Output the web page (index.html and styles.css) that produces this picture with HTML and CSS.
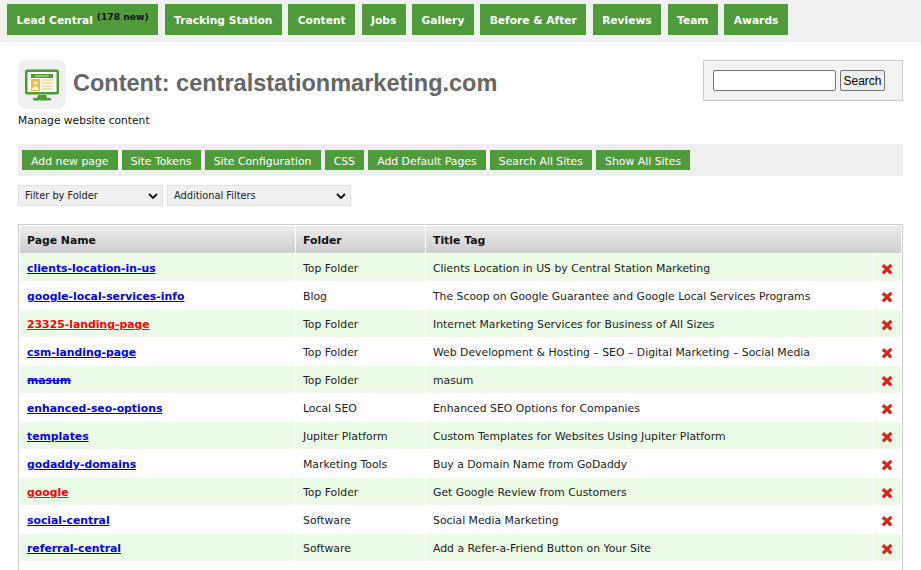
FILE: index.html
```html
<!DOCTYPE html>
<html lang="en">
<head>
<meta charset="utf-8">
<title>Content: centralstationmarketing.com</title>
<link rel="stylesheet" href="styles.css">
</head>
<body>
<svg class="sprite" aria-hidden="true"><symbol id="x" viewBox="0 0 12 12"><path d="M0.500 3.500L3 1l3 2.800L9.500 0.800 11.500 3 8.300 6l3 3.200L9 11.500 6 8.400 2.800 11.500 0.800 9.300 3.800 6z"/></symbol></svg>
<nav class="topnav">
  <a class="navbtn" href="#">Lead Central <sup class="newcount">(178 new)</sup></a>
  <a class="navbtn" href="#">Tracking Station</a>
  <a class="navbtn" href="#">Content</a>
  <a class="navbtn" href="#">Jobs</a>
  <a class="navbtn" href="#">Gallery</a>
  <a class="navbtn" href="#">Before &amp; After</a>
  <a class="navbtn" href="#">Reviews</a>
  <a class="navbtn" href="#">Team</a>
  <a class="navbtn" href="#">Awards</a>
</nav>
<main class="page">
  <header class="pagehead">
    <div class="titleblock">
      <div class="titlerow">
        <div class="appicon">
          <svg viewBox="0 0 36 32" width="36" height="32" aria-hidden="true">
            <rect x="1" y="0.500" width="34" height="25" rx="2" fill="#4a9e2f"/>
            <rect x="3.500" y="3" width="29" height="20" fill="#fff"/>
            <rect x="7" y="5" width="22" height="4" fill="#4a9e2f"/>
            <rect x="11" y="6.500" width="14" height="1" fill="#cfe8c4"/>
            <rect x="7" y="10" width="9" height="12" fill="#f5b93a"/>
            <circle cx="11.500" cy="14" r="2" fill="#fff1c4"/>
            <path d="M8 21c0-3 2-4 3.500-4s3.500 1 3.500 4z" fill="#fff1c4"/>
            <path d="M18 11h11M18 14h11M18 17h11M18 20h11" stroke="#f5c452" stroke-width="1.200"/>
            <path d="M14 26h8l1 3h-10z" fill="#4a9e2f"/>
            <rect x="9" y="29" width="18" height="2.500" rx="1" fill="#4a9e2f"/>
          </svg>
        </div>
        <h1 class="pagetitle">Content: centralstationmarketing.com</h1>
      </div>
      <p class="subtitle">Manage website content</p>
    </div>
    <form class="searchbox">
      <input class="searchinput" type="text">
      <button class="searchbtn" type="button">Search</button>
    </form>
  </header>

  <div class="toolbar">
    <a class="toolbtn" href="#">Add new page</a>
    <a class="toolbtn" href="#">Site Tokens</a>
    <a class="toolbtn" href="#">Site Configuration</a>
    <a class="toolbtn" href="#">CSS</a>
    <a class="toolbtn" href="#">Add Default Pages</a>
    <a class="toolbtn" href="#">Search All Sites</a>
    <a class="toolbtn" href="#">Show All Sites</a>
  </div>

  <div class="filters">
    <div class="filter filter-folder">Filter by Folder<svg class="chev" viewBox="0 0 10 6" width="10" height="6"><path d="M1 1l4 4 4-4" fill="none" stroke="#111" stroke-width="1.800"/></svg></div>
    <div class="filter filter-extra">Additional Filters<svg class="chev" viewBox="0 0 10 6" width="10" height="6"><path d="M1 1l4 4 4-4" fill="none" stroke="#111" stroke-width="1.800"/></svg></div>
  </div>

  <table class="pages">
    <colgroup><col class="col-name"><col class="col-folder"><col><col class="col-del"></colgroup>
    <thead>
      <tr><th>Page Name</th><th>Folder</th><th colspan="2">Title Tag</th></tr>
    </thead>
    <tbody>
      <tr><td><a href="#">clients-location-in-us</a></td><td>Top Folder</td><td>Clients Location in US by Central Station Marketing</td><td class="del"><svg class="x"><use href="#x"/></svg></td></tr>
      <tr><td><a href="#">google-local-services-info</a></td><td>Blog</td><td>The Scoop on Google Guarantee and Google Local Services Programs</td><td class="del"><svg class="x"><use href="#x"/></svg></td></tr>
      <tr><td><a class="warn" href="#">23325-landing-page</a></td><td>Top Folder</td><td>Internet Marketing Services for Business of All Sizes</td><td class="del"><svg class="x"><use href="#x"/></svg></td></tr>
      <tr><td><a href="#">csm-landing-page</a></td><td>Top Folder</td><td>Web Development &amp; Hosting – SEO – Digital Marketing – Social Media</td><td class="del"><svg class="x"><use href="#x"/></svg></td></tr>
      <tr><td><a class="struck" href="#">masum</a></td><td>Top Folder</td><td>masum</td><td class="del"><svg class="x"><use href="#x"/></svg></td></tr>
      <tr><td><a href="#">enhanced-seo-options</a></td><td>Local SEO</td><td>Enhanced SEO Options for Companies</td><td class="del"><svg class="x"><use href="#x"/></svg></td></tr>
      <tr><td><a href="#">templates</a></td><td>Jupiter Platform</td><td>Custom Templates for Websites Using Jupiter Platform</td><td class="del"><svg class="x"><use href="#x"/></svg></td></tr>
      <tr><td><a href="#">godaddy-domains</a></td><td>Marketing Tools</td><td>Buy a Domain Name from GoDaddy</td><td class="del"><svg class="x"><use href="#x"/></svg></td></tr>
      <tr><td><a class="warn" href="#">google</a></td><td>Top Folder</td><td>Get Google Review from Customers</td><td class="del"><svg class="x"><use href="#x"/></svg></td></tr>
      <tr><td><a href="#">social-central</a></td><td>Software</td><td>Social Media Marketing</td><td class="del"><svg class="x"><use href="#x"/></svg></td></tr>
      <tr><td><a href="#">referral-central</a></td><td>Software</td><td>Add a Refer-a-Friend Button on Your Site</td><td class="del"><svg class="x"><use href="#x"/></svg></td></tr>
      <tr><td></td><td></td><td></td><td class="del"></td></tr>
    </tbody>
  </table>
</main>
</body>
</html>
```
FILE: styles.css
```css
* { box-sizing: border-box; }
html, body { margin: 0; padding: 0; height: 570px; overflow: hidden; background: #fff; }
body { font-family: "DejaVu Sans", Verdana, sans-serif; font-size: 10.700px; color: #111; }
a { text-decoration: none; }
.sprite { display: none; }

.topnav { display: flex; gap: 6.500px; height: 42px; padding: 4px 7px 0; background: #f1f1f1; }
.navbtn { display: block; height: 31px; padding: 0 9.400px; line-height: 33px; background: #4f9b3c; color: #fff; font-weight: 700; font-size: 10.700px; white-space: nowrap; }
.newcount { font-size: 9.200px; color: #111; font-weight: 700; vertical-align: 4px; line-height: 0; }

.page { padding: 18px 18px 0; }
.pagehead { display: flex; justify-content: space-between; align-items: flex-start; height: 84px; }
.titlerow { display: flex; align-items: center; gap: 7px; }
.appicon { width: 48px; height: 49px; border-radius: 8px; background: #efefef; display: flex; align-items: center; justify-content: center; }
.pagetitle { margin: 0 0 2px; font-family: "Liberation Sans", Arial, sans-serif; font-size: 23.500px; font-weight: 700; color: #666; }
.subtitle { margin: 5px 0 0; font-size: 10.700px; }

.searchbox { display: flex; align-items: center; gap: 4px; width: 200px; height: 41px; padding: 0 9px; border: 1px solid #ccc; background: #f2f2f2; }
.searchinput { width: 123px; height: 21px; border: 1px solid #767676; border-radius: 2px; background: #fff; padding: 0; }
.searchbtn { width: 45px; height: 21px; border: 1px solid #767676; border-radius: 2px; background: #efefef; padding: 0; font-family: "Liberation Sans", Arial, sans-serif; font-size: 12px; color: #000; }

.toolbar { display: flex; gap: 4px; height: 32px; padding: 6px 4px; background: #efefef; }
.toolbtn { display: block; height: 20px; line-height: 23px; padding: 0 9.100px; background: #4f9b3c; color: #fff; font-size: 10.850px; white-space: nowrap; }

.filters { display: flex; gap: 4px; margin-top: 9px; }
.filter { display: flex; align-items: center; justify-content: space-between; height: 21px; padding: 0 2px 0 6px; background: #efefef; border: 1px solid #e0e0e0; font-size: 9.800px; color: #222; }
.filter-folder { width: 145px; }
.filter-extra { width: 184px; }
.chev { margin-right: 2px; }

.pages { width: 885px; margin-top: 18px; border-collapse: separate; border-spacing: 1px; border: 1px solid #ccc; table-layout: fixed; }
.col-name { width: 275px; }
.col-folder { width: 129px; }
.col-del { width: 28px; }
.pages th { height: 27px; padding: 2px 7px 0; text-align: left; font-size: 10.850px; font-weight: 700; color: #111; background: linear-gradient(#ececec, #cdcdcd); }
.pages td { height: 27px; padding: 2px 7px 0; font-size: 10.850px; color: #222; white-space: nowrap; }
.pages td:first-child { font-weight: 700; }
.pages td a { color: #00e; text-decoration: underline; }
.pages td a.warn { color: #f00; }
.pages td a.struck { text-decoration: line-through; }
.pages tbody tr:nth-child(odd) td { background: #ebfae7; }
.pages td.del { padding: 0; }
.x { display: block; width: 12px; height: 12px; margin: 3px auto 0; fill: #d8281a; }
```
